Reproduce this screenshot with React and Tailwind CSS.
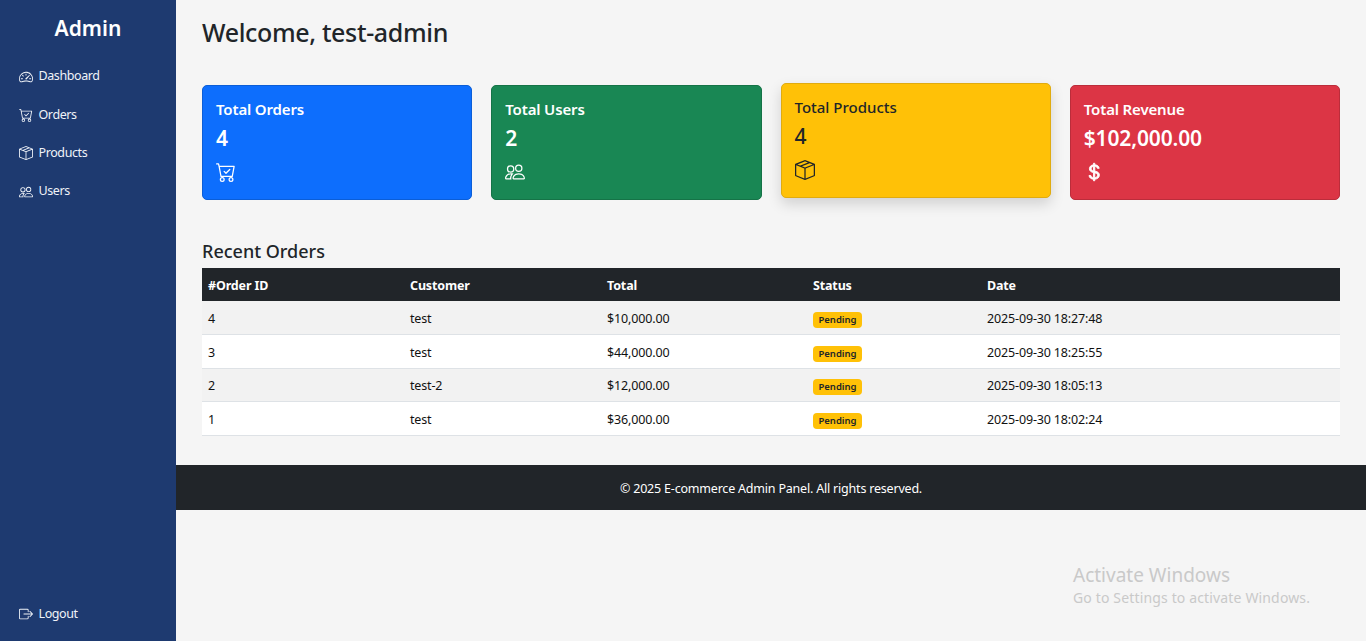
import { BsSpeedometer2, BsCartCheck, BsBoxSeam, BsPeople, BsBoxArrowRight, BsCurrencyDollar } from 'react-icons/bs';

const navItems = [
  { name: 'Dashboard', icon: BsSpeedometer2 },
  { name: 'Orders', icon: BsCartCheck },
  { name: 'Products', icon: BsBoxSeam },
  { name: 'Users', icon: BsPeople },
];

const cards = [
  { title: 'Total Orders', value: '4', icon: BsCartCheck, color: 'bg-[#0d6efd] border-[#0b5ed7] text-white font-semibold tracking-[-0.15px]' },
  { title: 'Total Users', value: '2', icon: BsPeople, color: 'bg-[#198754] border-[#157347] text-white font-semibold tracking-[-0.15px]' },
  { title: 'Total Products', value: '4', icon: BsBoxSeam, color: 'bg-[#ffc107] border-[#e0ab10] text-[#212529] font-medium -translate-y-[2px] shadow-[0_6px_14px_rgba(0,0,0,0.15)]' },
  { title: 'Total Revenue', value: '$102,000.00', icon: BsCurrencyDollar, iconClass: 'stroke-current stroke-[0.7]', color: 'bg-[#dc3545] border-[#bb2d3b] text-white font-semibold tracking-[-0.15px]' },
];

const orders = [
  { id: 4, customer: 'test', total: '$10,000.00', date: '2025-09-30 18:27:48', rowClass: 'h-[34px] bg-[#f2f2f2]' },
  { id: 3, customer: 'test', total: '$44,000.00', date: '2025-09-30 18:25:55', rowClass: 'h-[34px] bg-white' },
  { id: 2, customer: 'test-2', total: '$12,000.00', date: '2025-09-30 18:05:13', rowClass: 'h-[33px] bg-[#f2f2f2]' },
  { id: 1, customer: 'test', total: '$36,000.00', date: '2025-09-30 18:02:24', rowClass: 'h-[34px] bg-white' },
];

const thClass = 'px-[6px] pt-[3px] font-bold';
const tdClass = 'border-b border-[#dee2e6] px-[6px] pt-[3px]';

export default function App() {
  return (
    <div className="relative flex h-[641px] overflow-hidden bg-[#f5f5f5] font-['Noto_Sans',sans-serif] text-[#212529]">
      <aside className="flex w-[176px] shrink-0 flex-col bg-[#1e3a70] text-white">
        <h1 className="mt-[12px] h-[32px] text-center text-[21px] leading-[32px] font-semibold">Admin</h1>
        <nav className="mt-[13.5px] flex flex-col">
          {navItems.map((item) => {
            const Icon = item.icon;
            return (
              <a key={item.name} className="flex h-[38.3px] items-center pl-[19px] text-[12.5px] tracking-[-0.4px] text-[#f0f3f8]">
                <Icon className="mr-[5.5px] h-[14px] w-[14px]" />
                {item.name}
              </a>
            );
          })}
        </nav>
        <a className="mt-auto mb-[8px] flex h-[38px] items-center pl-[19px] text-[12.5px] tracking-[-0.4px] text-[#f0f3f8]">
          <BsBoxArrowRight className="mr-[5.5px] h-[14px] w-[14px]" />
          Logout
        </a>
      </aside>

      <div className="flex min-w-0 flex-1 flex-col">
        <main className="px-[26px] pt-[14px] pb-[29px]">
          <h2 className="h-[36px] text-[25px] leading-[36px] font-medium tracking-[-0.35px]">Welcome, test-admin</h2>

          <div className="mt-[35px] grid grid-cols-4 gap-[19px]">
            {cards.map((card) => {
              const Icon = card.icon;
              return (
                <div key={card.title} className={`h-[115px] rounded-[5px] border px-[13px] pt-[12px] ${card.color}`}>
                  <div className="h-[22px] text-[15px] leading-[22px]">{card.title}</div>
                  <div className="mt-[2px] h-[32px] text-[21px] leading-[32px]">{card.value}</div>
                  <Icon className={`mt-[8px] h-[20px] w-[20px] ${card.iconClass ?? ''}`} />
                </div>
              );
            })}
          </div>

          <h3 className="mt-[39px] h-[29px] text-[18px] leading-[24px] font-medium">Recent Orders</h3>

          <table className="w-full table-fixed border-separate border-spacing-0 text-[12.5px] tracking-[-0.15px]">
            <colgroup>
              <col className="w-[202px]" />
              <col className="w-[197px]" />
              <col className="w-[206px]" />
              <col className="w-[174px]" />
              <col />
            </colgroup>
            <thead>
              <tr className="h-[33px] bg-[#212529] text-left text-white">
                <th className={thClass}>#Order ID</th>
                <th className={thClass}>Customer</th>
                <th className={thClass}>Total</th>
                <th className={thClass}>Status</th>
                <th className={thClass}>Date</th>
              </tr>
            </thead>
            <tbody>
              {orders.map((order) => (
                <tr key={order.id} className={`text-[#111] ${order.rowClass}`}>
                  <td className={tdClass}>{order.id}</td>
                  <td className={tdClass}>{order.customer}</td>
                  <td className={tdClass}>{order.total}</td>
                  <td className={tdClass}>
                    <span className="inline-block h-[16px] w-[49px] rounded-[4px] bg-[#ffc107] text-center text-[9.5px] leading-[16px] font-semibold tracking-normal text-[#212529]">Pending</span>
                  </td>
                  <td className={tdClass}>{order.date}</td>
                </tr>
              ))}
            </tbody>
          </table>
        </main>

        <footer className="flex h-[45px] items-center justify-center bg-[#212529] pt-[4px] text-[12.5px] tracking-[-0.2px] text-white">
          © 2025 E-commerce Admin Panel. All rights reserved.
        </footer>
      </div>

      <div className="absolute top-[563px] left-[1073px] text-[#c9c9c9]">
        <div className="text-[19px] leading-[25px]">Activate Windows</div>
        <div className="text-[14px] leading-[20px] tracking-[0.15px]">Go to Settings to activate Windows.</div>
      </div>
    </div>
  );
}
